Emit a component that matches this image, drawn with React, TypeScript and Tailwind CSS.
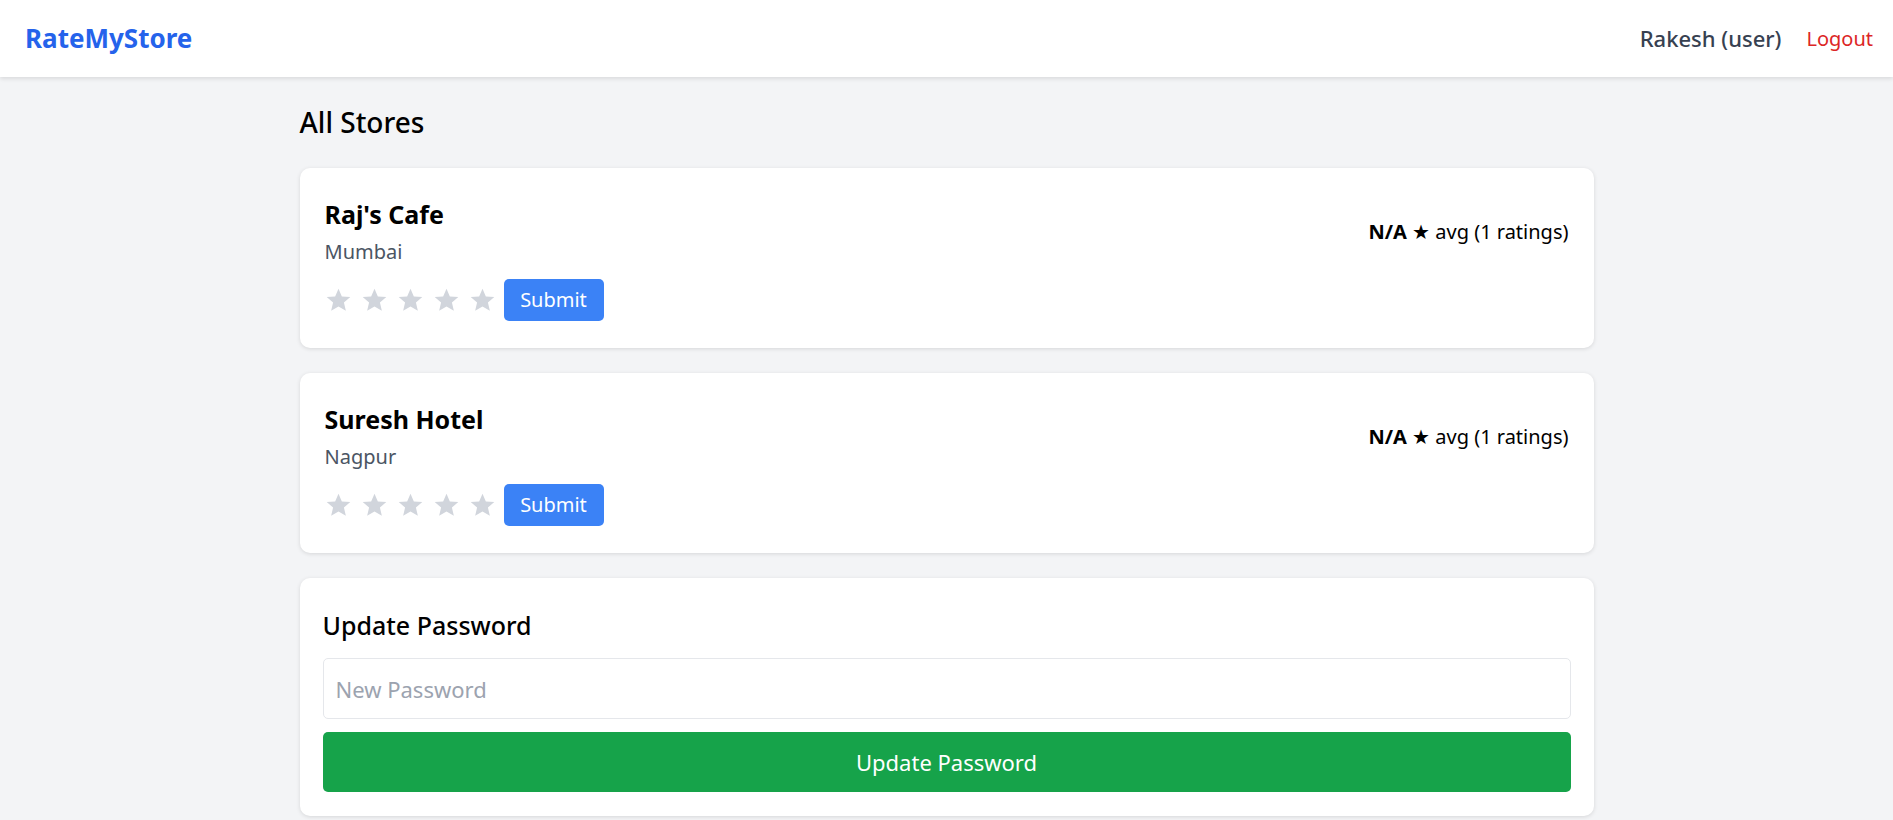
import { useState } from 'react';

const font = { fontFamily: '"Noto Sans", "Open Sans", sans-serif' };

type Store = { id: number; name: string; city: string; avg: string; count: number };

const stores: Store[] = [
  { id: 1, name: "Raj's Cafe", city: 'Mumbai', avg: 'N/A', count: 1 },
  { id: 2, name: 'Suresh Hotel', city: 'Nagpur', avg: 'N/A', count: 1 },
];

function Star({ on }: { on: boolean }) {
  return (
    <svg viewBox="0 0 24 24" className={on ? 'w-[27px] h-[26px] fill-yellow-400' : 'w-[27px] h-[26px] fill-gray-300'}>
      <path d="M12 1.5l3.1 7.2 7.8.6-5.9 5.1 1.8 7.6L12 17.9 5.2 22l1.8-7.6L1.1 9.3l7.8-.6z" />
    </svg>
  );
}

function StoreCard({ store }: { store: Store }) {
  const [rating, setRating] = useState(0);
  return (
    <div className="bg-white rounded-[10px] shadow-[0_1px_4px_rgba(0,0,0,0.12)] px-[25px] pt-[29px] pb-[27px]">
      <div className="flex items-center justify-between">
        <div>
          <h3 className="text-[25px] leading-[34px] font-bold text-black">{store.name}</h3>
          <p className="text-[20px] leading-[28px] text-[#4b5563] mt-[7px]">{store.city}</p>
        </div>
        <div className="text-[20px] text-black">
          <span className="font-bold">{store.avg}</span> ★ avg ({store.count} ratings)
        </div>
      </div>
      <div className="flex items-center mt-[13px]">
        <div className="flex items-center gap-[9px]">
          {[1, 2, 3, 4, 5].map((n) => (
            <button key={n} onClick={() => setRating(n)} className="cursor-pointer">
              <Star on={n <= rating} />
            </button>
          ))}
        </div>
        <button className="ml-[8px] h-[42px] w-[100px] rounded-[5px] bg-[#3b82f6] text-white text-[20px]">
          Submit
        </button>
      </div>
    </div>
  );
}

export default function App() {
  return (
    <div className="min-h-screen bg-[#f3f4f6]" style={font}>
      {/* Navbar */}
      <header className="h-[77px] bg-white shadow-[0_2px_4px_rgba(0,0,0,0.1)] flex items-center justify-between pl-[25px] pr-[20px]">
        <div className="text-[26px] font-bold text-[#2563eb]">RateMyStore</div>
        <div className="flex items-center gap-[25px]">
          <span className="text-[22px] font-medium text-[#374151]">Rakesh (user)</span>
          <button className="text-[20px] text-[#dc2626]">Logout</button>
        </div>
      </header>

      <main className="w-[1294px] mx-auto pt-[25px]">
        <h2 className="text-[28px] leading-[40px] font-medium text-black mb-[26px]">All Stores</h2>

        <div className="flex flex-col gap-[25px]">
          {stores.map((s) => (
            <StoreCard key={s.id} store={s} />
          ))}

          {/* Update password */}
          <div className="bg-white rounded-[10px] shadow-[0_1px_4px_rgba(0,0,0,0.12)] px-[23px] pt-[30px] pb-[24px]">
            <h3 className="text-[25px] leading-[34px] font-medium text-black">Update Password</h3>
            <input
              type="password"
              placeholder="New Password"
              className="mt-[16px] w-full h-[61px] border border-[#e5e7eb] rounded-[5px] px-[12px] text-[22px] placeholder:text-[#9ca3af] outline-none"
            />
            <button className="mt-[13px] w-full h-[60px] rounded-[5px] bg-[#16a34a] text-white text-[22px]">
              Update Password
            </button>
          </div>
        </div>
      </main>
    </div>
  );
}
